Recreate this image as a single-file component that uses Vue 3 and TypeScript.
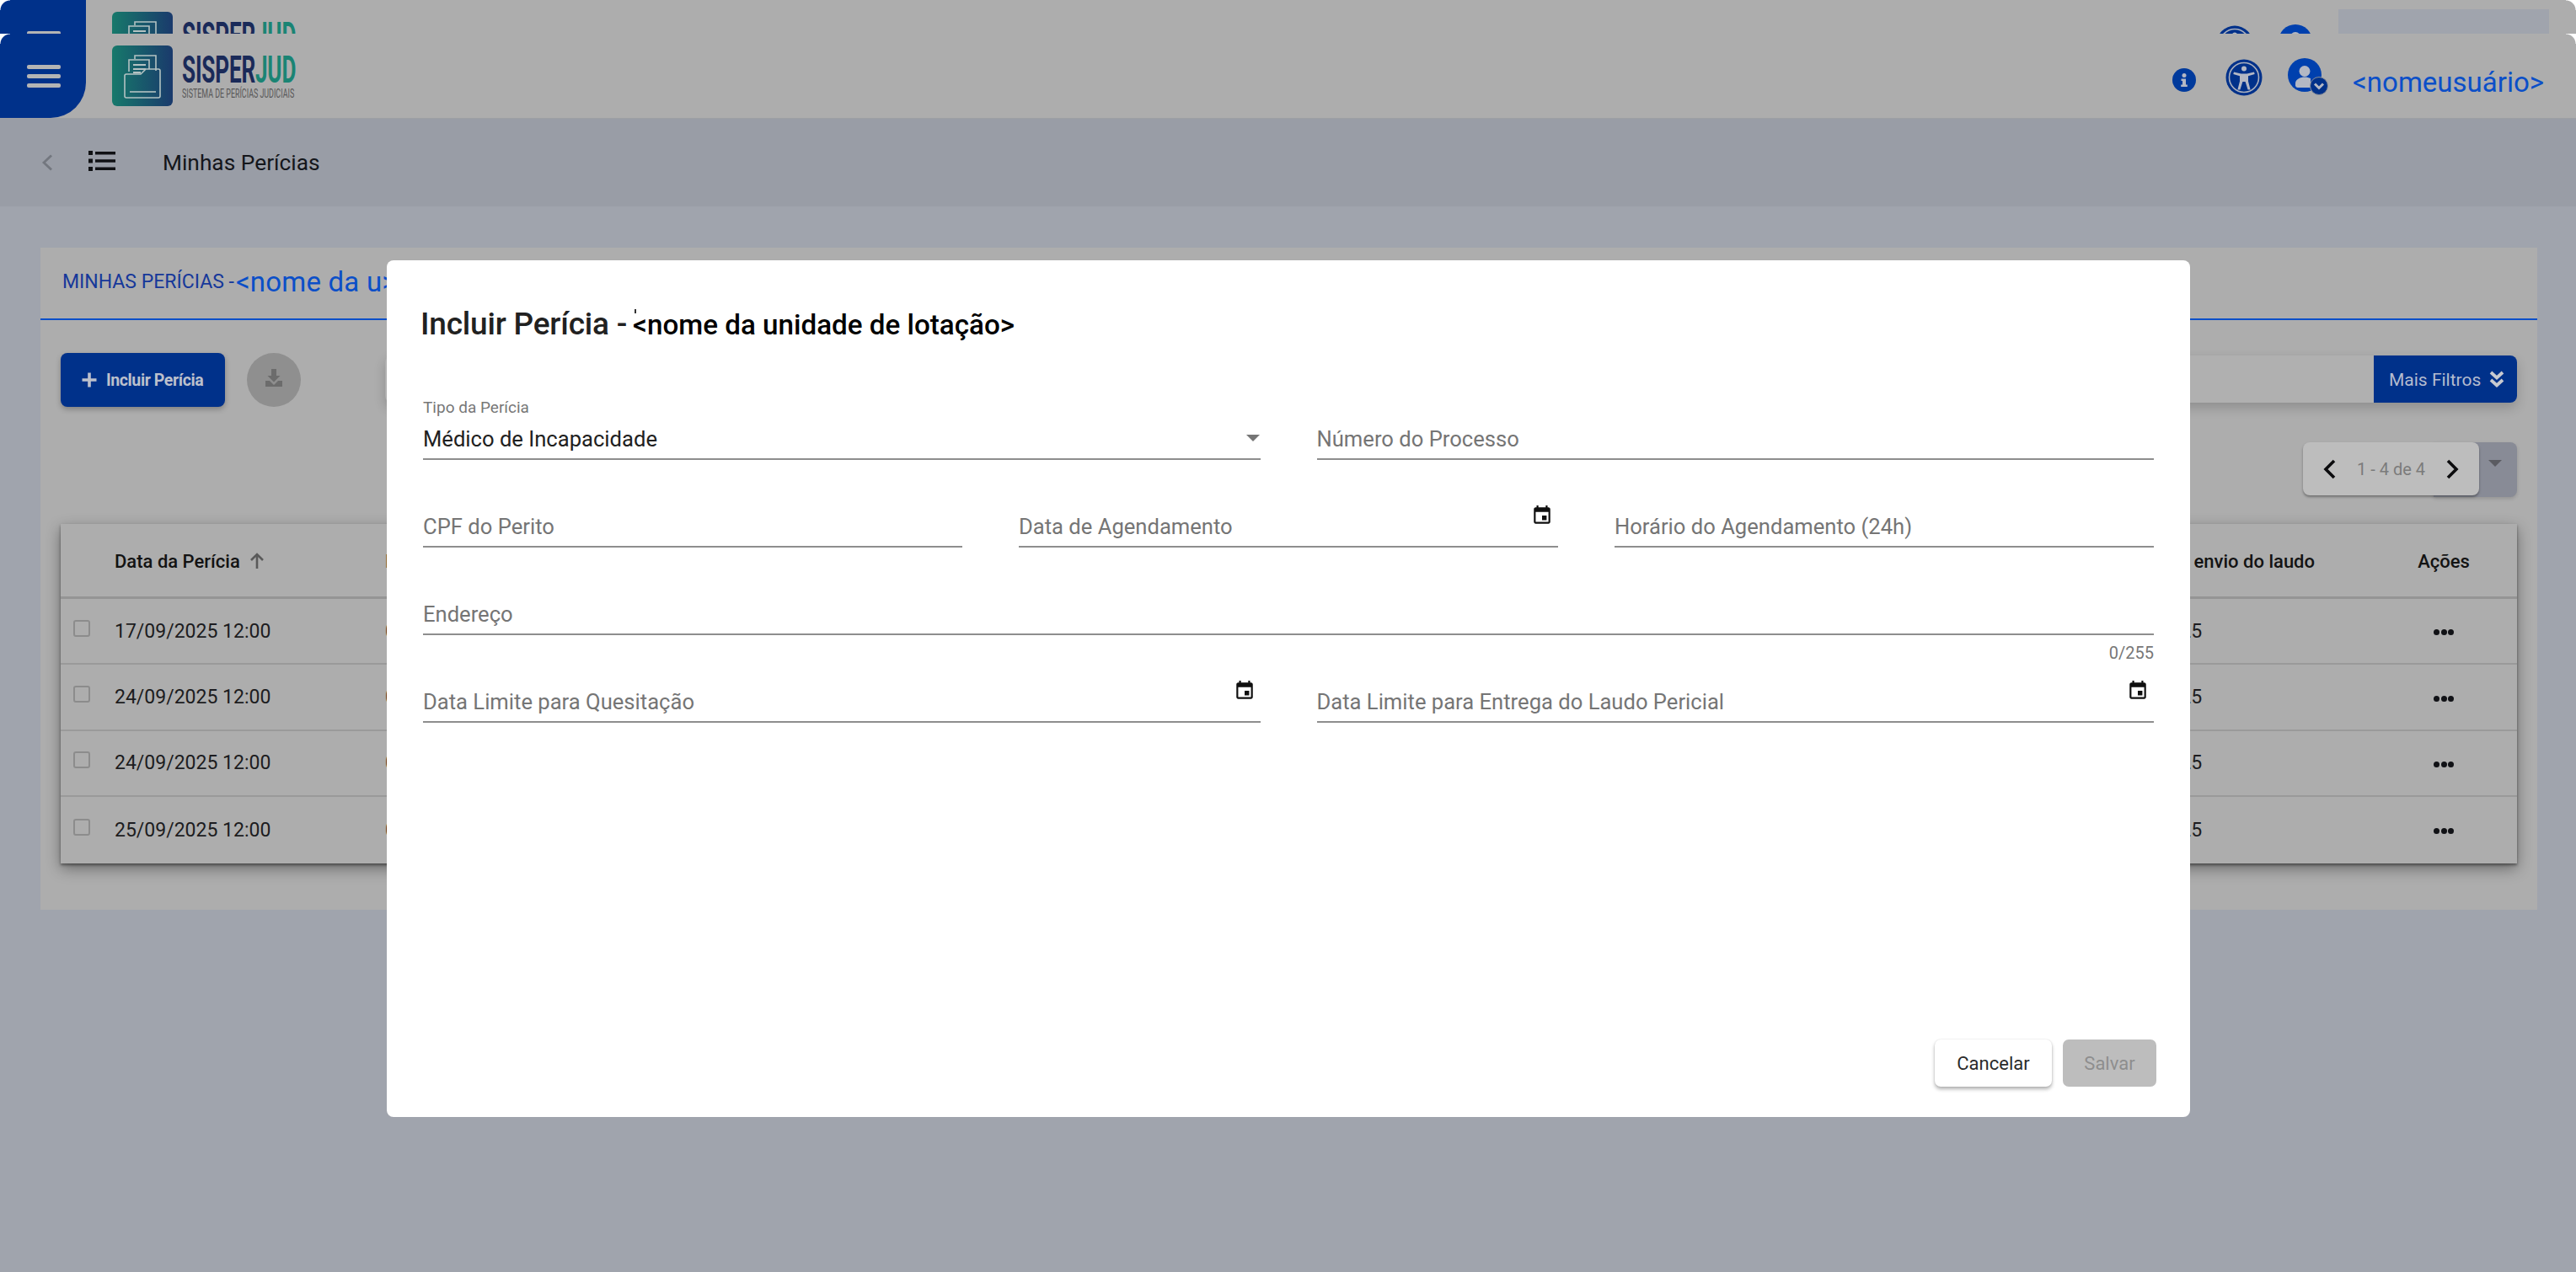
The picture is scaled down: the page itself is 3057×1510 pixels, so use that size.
<script setup lang="ts">
interface Row {
  date: string
  limit: string
}
const rows: Row[] = [
  { date: '17/09/2025 12:00', limit: '17/10/2025' },
  { date: '24/09/2025 12:00', limit: '24/10/2025' },
  { date: '24/09/2025 12:00', limit: '24/10/2025' },
  { date: '25/09/2025 12:00', limit: '25/10/2025' },
]
const headers = ['strip', 'main']
</script>

<template>
  <div class="page">
    <div v-for="h in headers" :key="h" :class="h === 'strip' ? 'header-clip' : 'header-full'">
      <header class="header">
        <button class="menu" aria-label="Menu">
          <span></span><span></span><span></span>
        </button>
        <div class="logo">
          <svg class="logo-mark" width="72" height="72" viewBox="0 0 72 72">
            <defs>
              <linearGradient :id="'lg-' + h" x1="0" y1="0" x2="1" y2="0">
                <stop offset="0" stop-color="#17796b" />
                <stop offset="1" stop-color="#1a3a6c" />
              </linearGradient>
            </defs>
            <rect width="72" height="72" rx="6" :fill="'url(#lg-' + h + ')'" />
            <g fill="none" stroke="#b3c2c2" stroke-width="1.6">
              <path d="M27 16v-4h25v18" />
              <path d="M20 31V17h24v11" />
              <path d="M25 23h15M25 28h15M25 32h9" stroke-width="1.8" />
              <path d="M17 34h17l6-6h15a2 2 0 0 1 2 2v30a2 2 0 0 1-2 2H17a2 2 0 0 1-2-2V36a2 2 0 0 1 2-2z" />
              <path d="M21 55h31" />
            </g>
          </svg>
          <div class="logo-text">
            <div class="logo-name"><span class="n1">SISPER</span><span class="n2">JUD</span></div>
            <div v-if="h === 'main'" class="logo-sub">SISTEMA DE PERÍCIAS JUDICIAIS</div>
          </div>
        </div>
        <div class="head-right">
          <svg class="ic-info" width="28" height="28" viewBox="0 0 28 28">
            <circle cx="14" cy="14" r="14" fill="#003a9c" />
            <circle cx="14" cy="8.5" r="2.500" fill="#b4b8c4" />
            <path d="M10.500 12.500h5.500v7h1.800V22H10.200v-2.500H12V15h-1.500z" fill="#b4b8c4" />
          </svg>
          <svg class="ic-acc" width="44" height="44" viewBox="0 0 44 44">
            <circle cx="22" cy="22" r="21.500" fill="#00318a" />
            <circle cx="22" cy="22" r="17.500" fill="none" stroke="#a9aebc" stroke-width="1.600" />
            <circle cx="22" cy="11.500" r="3" fill="#b4b8c4" />
            <path d="M10 15.500l8.500 2h7l8.500-2 .7 2.600-7.700 2.200v6.200l2.600 10h-3l-3-9.400h-3.200l-3 9.400h-3l2.600-10v-6.200l-7.700-2.200z" fill="#b4b8c4" />
          </svg>
          <svg class="ic-user" width="50" height="46" viewBox="0 0 50 46">
            <circle cx="20" cy="20" r="20" fill="#0040ae" />
            <circle cx="20" cy="15.500" r="6.500" fill="#b4b8c4" />
            <path d="M9 33v-3c0-5 6-7.500 11-7.500 3 0 5 .6 7 1.500V35H12a3 3 0 0 1-3-2z" fill="#b4b8c4" />
            <circle cx="37" cy="33" r="10.500" fill="#00318a" stroke="#8d9099" stroke-width="1" />
            <path d="M32 30.500l5 5 5-5" fill="none" stroke="#b4b8c4" stroke-width="3" />
          </svg>
          <span v-if="h === 'main'" class="username">&lt;nomeusuário&gt;</span>
        </div>
        <i class="corner corner-l"></i>
        <i class="corner corner-r"></i>
      </header>
      <div v-if="h === 'strip'" class="strip-patch"></div>
    </div>

    <nav class="subheader">
      <svg class="ic-back" width="14" height="20" viewBox="0 0 14 20">
        <path d="M12 1.500L3 10l9 8.500" fill="none" stroke="#73777f" stroke-width="2.800" />
      </svg>
      <svg class="ic-list" width="32" height="26" viewBox="0 0 32 26">
        <path d="M0 1h5v5H0zM0 10.500h5v5H0zM0 20h5v5H0zM8 2h24v3.400H8zM8 11.300h24v3.400H8zM8 20.600h24V24H8z" fill="#101114" />
      </svg>
      <span class="crumb">Minhas Perícias</span>
    </nav>

    <main class="content">
      <section class="card">
        <div class="card-title">
          <span class="t1">MINHAS PERÍCIAS -</span><span class="t2">&lt;nome da u&gt;</span>
        </div>
        <div class="card-body">
          <div class="toolbar">
            <button class="btn-add">
              <svg width="20" height="20" viewBox="0 0 20 20"><path d="M8.200 1.500h3.600v6.700h6.700v3.600h-6.700v6.700H8.200v-6.700H1.500V8.200h6.700z" fill="#bcc0cc" /></svg>
              <span>Incluir Perícia</span>
            </button>
            <button class="btn-dl" aria-label="Baixar">
              <svg width="24" height="24" viewBox="0 0 24 24">
                <path d="M9 1h6v8h4.500L12 16.500 4.500 9H9zM2 15h5l5 5 5-5h5v7H2z" fill="#6c6c6c" />
              </svg>
            </button>
            <div class="search">
              <button class="btn-more">
                <span>Mais Filtros</span>
                <svg width="18" height="22" viewBox="0 0 18 22">
                  <path d="M2 2l7 6.500L16 2M2 11l7 6.500L16 11" fill="none" stroke="#c8cad0" stroke-width="3.800" />
                </svg>
              </button>
            </div>
          </div>
          <div class="pager-row">
            <div class="pager">
              <div class="pager-back"><i class="caret-dark"></i></div>
              <div class="pager-card">
                <svg width="16" height="24" viewBox="0 0 16 24"><path d="M13 2L3 12l10 10" fill="none" stroke="#0c0c0e" stroke-width="3.600" /></svg>
                <span class="pager-text">1 - 4 de 4</span>
                <svg width="16" height="24" viewBox="0 0 16 24"><path d="M3 2l10 10L3 22" fill="none" stroke="#0c0c0e" stroke-width="3.600" /></svg>
              </div>
            </div>
          </div>
          <div class="table">
            <div class="tr thead">
              <div></div>
              <div class="th-date">
                <span>Data da Perícia</span>
                <svg width="18" height="20" viewBox="0 0 18 20"><path d="M9 19V3M2 9l7-7 7 7" fill="none" stroke="#5a5a5a" stroke-width="2.600" /></svg>
              </div>
              <div>Processo</div>
              <div class="th-right">Data limite para envio do laudo</div>
              <div class="center acoes">Ações</div>
            </div>
            <div v-for="(r, i) in rows" :key="i" class="tr tbody">
              <div class="cell-check"><i class="check"></i></div>
              <div>{{ r.date }}</div>
              <div>0000</div>
              <div class="center">{{ r.limit }}</div>
              <div class="center acoes"><span class="dots"><i></i><i></i><i></i></span></div>
            </div>
          </div>
        </div>
      </section>
    </main>

    <div class="dialog" role="dialog">
      <h2 class="dlg-title">
        <span class="dt1">Incluir Perícia -</span><span class="dt2">&lt;nome da unidade de lotação&gt;</span>
      </h2>
      <div class="form">
        <div class="form-row cols-2">
          <div class="field">
            <label class="float">Tipo da Perícia</label>
            <span class="value">Médico de Incapacidade</span>
            <i class="caret"></i>
          </div>
          <div class="field"><span class="ph">Número do Processo</span></div>
        </div>
        <div class="form-row cols-3">
          <div class="field"><span class="ph">CPF do Perito</span></div>
          <div class="field">
            <span class="ph">Data de Agendamento</span>
            <svg class="cal" width="26" height="26" viewBox="0 0 24 24"><path d="M17 12h-5v5h5v-5zM16 1v2H8V1H6v2H5c-1.110 0-1.990.9-1.990 2L3 19c0 1.100.89 2 2 2h14c1.100 0 2-.9 2-2V5c0-1.100-.9-2-2-2h-1V1h-2zm3 18H5V8h14v11z" /></svg>
          </div>
          <div class="field"><span class="ph">Horário do Agendamento (24h)</span></div>
        </div>
        <div class="form-row">
          <div class="field">
            <span class="ph">Endereço</span>
            <span class="counter">0/255</span>
          </div>
        </div>
        <div class="form-row cols-2">
          <div class="field">
            <span class="ph">Data Limite para Quesitação</span>
            <svg class="cal" width="26" height="26" viewBox="0 0 24 24"><path d="M17 12h-5v5h5v-5zM16 1v2H8V1H6v2H5c-1.110 0-1.990.9-1.990 2L3 19c0 1.100.89 2 2 2h14c1.100 0 2-.9 2-2V5c0-1.100-.9-2-2-2h-1V1h-2zm3 18H5V8h14v11z" /></svg>
          </div>
          <div class="field">
            <span class="ph">Data Limite para Entrega do Laudo Pericial</span>
            <svg class="cal" width="26" height="26" viewBox="0 0 24 24"><path d="M17 12h-5v5h5v-5zM16 1v2H8V1H6v2H5c-1.110 0-1.990.9-1.990 2L3 19c0 1.100.89 2 2 2h14c1.100 0 2-.9 2-2V5c0-1.100-.9-2-2-2h-1V1h-2zm3 18H5V8h14v11z" /></svg>
          </div>
        </div>
      </div>
      <div class="dlg-actions">
        <button class="btn-cancel">Cancelar</button>
        <button class="btn-save" disabled>Salvar</button>
      </div>
    </div>
  </div>
</template>

<style>
html, body { margin: 0; background: #a0a4ad; }
</style>

<style scoped>
.page {
  position: relative;
  width: 3057px;
  height: 1510px;
  overflow: hidden;
  background: #a0a4ad;
  font-family: Roboto, "Liberation Sans", sans-serif;
  color: #1a1a1c;
}
button { font-family: inherit; border: 0; cursor: pointer; padding: 0; }
i { display: block; font-style: normal; }

.header-clip { position: relative; height: 40px; overflow: hidden; }
.header-full { height: 100px; }
.strip-patch {
  position: absolute;
  left: 2775px;
  top: 11px;
  width: 250px;
  height: 29px;
  background: #a0a4ad;
}
.header {
  position: relative;
  display: flex;
  height: 100px;
  background: #adadad;
}
.menu {
  display: flex;
  flex-direction: column;
  gap: 6px;
  width: 102px;
  height: 100px;
  padding: 37px 30px 0 32px;
  box-sizing: border-box;
  background: #00318a;
  border-radius: 0 0 42px 0;
}
.menu span { display: block; height: 5px; width: 40px; border-radius: 2px; background: #b4b4b4; }
.corner { position: absolute; top: 0; width: 12px; height: 12px; }
.corner-l { left: 0; background: radial-gradient(circle at 100% 100%, transparent 11px, #ffffff 12px); }
.corner-r { right: 0; background: radial-gradient(circle at 0 100%, transparent 11px, #ffffff 12px); }

.logo { display: flex; align-items: flex-start; gap: 11px; margin-left: 31px; }
.logo-mark { margin-top: 14px; }
.logo-text { width: 134px; margin-top: 25px; }
.logo-name {
  font-size: 45px;
  font-weight: 700;
  line-height: 36px;
  white-space: nowrap;
  transform: scaleX(0.58);
  transform-origin: 0 50%;
  letter-spacing: -0.3px;
}
.n1 { color: #1a2a59; }
.n2 { color: #1a8474; }
.logo-sub {
  margin-top: 3px;
  font-size: 15px;
  line-height: 14px;
  color: #585858;
  white-space: nowrap;
  transform: scaleX(0.593);
  transform-origin: 0 50%;
}

.head-right { display: flex; align-items: flex-start; margin-left: auto; padding-right: 38px; }
.ic-info { margin-top: 41px; }
.ic-acc { margin-top: 30px; margin-left: 35px; }
.ic-user { margin-top: 29px; margin-left: 30px; margin-right: 265px; }
.username {
  margin-top: 40px;
  margin-left: -238px;
  font-size: 33px;
  line-height: 36px;
  color: #0b4fc8;
  white-space: nowrap;
}

.subheader {
  display: flex;
  align-items: center;
  height: 105px;
  background: #999da6;
  padding-left: 49px;
  box-shadow: inset 0 1px 0 #9d9fa4;
}
.ic-list { margin-left: 42px; margin-top: -3px; }
.crumb { margin-left: 56px; margin-top: 1px; font-size: 26.300px; color: #14161b; }

.content { padding: 49px 46px 0 48px; }
.card { height: 786px; background: #adadad; }
.card-title {
  display: flex;
  align-items: center;
  box-sizing: border-box;
  height: 86px;
  padding: 0 0 3px 26px;
  border-bottom: 2px solid #0b4fc8;
  white-space: nowrap;
  overflow: hidden;
}
.t1 { font-size: 23px; color: #16389a; }
.t2 { margin-left: 2px; font-size: 33px; letter-spacing: 0.2px; color: #0b4fc8; }
.card-body { padding: 39px 24px 0; }

.toolbar { display: flex; align-items: flex-start; height: 64px; }
.btn-add {
  display: flex;
  align-items: center;
  gap: 10px;
  width: 195px;
  height: 64px;
  padding: 0 0 0 24px;
  box-sizing: border-box;
  border-radius: 8px;
  background: #00318a;
  color: #bcc0cc;
  font-size: 19.500px;
  font-weight: 700;
  letter-spacing: -0.4px;
  box-shadow: 0 3px 6px rgba(0, 0, 0, .25);
}
.btn-dl {
  display: flex;
  align-items: center;
  justify-content: center;
  width: 64px;
  height: 64px;
  margin-left: 26px;
  padding-bottom: 4px;
  border-radius: 50%;
  background: #8f8f8f;
}
.search {
  display: flex;
  justify-content: flex-end;
  flex: 1;
  height: 56px;
  margin: 3px 0 0 100px;
  background: #b0b0b0;
  border-radius: 8px;
  box-shadow: 0 6px 14px rgba(0, 0, 0, .18);
}
.btn-more {
  display: flex;
  align-items: center;
  gap: 10px;
  width: 170px;
  height: 56px;
  padding: 2px 0 0 18px;
  box-sizing: border-box;
  border-radius: 0 8px 8px 0;
  background: #00318a;
  color: #b4bccf;
  font-size: 21px;
}
.pager-row { display: flex; justify-content: flex-end; margin-top: 42px; }
.pager { position: relative; width: 254px; height: 65px; }
.pager-back {
  position: absolute;
  right: 0;
  top: 0;
  width: 99px;
  height: 65px;
  border-radius: 0 8px 8px 0;
  background: #888b96;
  box-shadow: 0 2px 4px rgba(0, 0, 0, .15);
}
.caret-dark {
  position: absolute;
  right: 18px;
  top: 21px;
  border-left: 8px solid transparent;
  border-right: 8px solid transparent;
  border-top: 8px solid #5a5b61;
}
.pager-card {
  position: relative;
  display: flex;
  align-items: center;
  justify-content: space-between;
  box-sizing: border-box;
  width: 209px;
  height: 63px;
  padding: 0 24px;
  border-radius: 8px;
  background: #bdbdbd;
  box-shadow: 0 2px 3px rgba(0, 0, 0, .35);
}
.pager-text { font-size: 20px; color: #7b7b7b; }

.table {
  margin-top: 32px;
  background: #adadad;
  box-shadow: 0 6px 16px rgba(0, 0, 0, .38), 0 2px 3px rgba(0, 0, 0, .4);
}
.tr {
  display: grid;
  grid-template-columns: 64px 321px 1fr 390px 240px;
  align-items: center;
  box-sizing: border-box;
}
.thead {
  height: 89px;
  padding-top: 2px;
  border-bottom: 3px solid #949494;
  font-size: 22px;
  font-weight: 500;
  color: #131313;
}
.th-date { display: flex; align-items: center; gap: 11px; }
.tbody {
  height: 78.400px;
  border-bottom: 2px solid #9a9a9a;
  font-size: 23px;
  color: #1c1c20;
}
.tbody:last-child { border-bottom: 0; }
.center { text-align: center; }
.th-right { text-align: right; white-space: nowrap; }
.acoes { padding-left: 66px; }
.cell-check { display: flex; padding-left: 15px; }
.check {
  width: 16px;
  height: 16px;
  margin-top: -7px;
  border: 2px solid #8c8c8c;
  border-radius: 3px;
}
.dots { display: inline-flex; gap: 1.500px; vertical-align: middle; }
.dots i { width: 7px; height: 7px; border-radius: 50%; background: #111216; }

.dialog {
  position: absolute;
  left: 459px;
  top: 309px;
  display: flex;
  flex-direction: column;
  box-sizing: border-box;
  width: 2140px;
  height: 1017px;
  padding: 0 43px 36px 43px;
  background: #fff;
  border-radius: 8px;
}
.dlg-title {
  display: flex;
  align-items: baseline;
  height: 169px;
  margin: 0;
  padding-top: 54px;
  box-sizing: border-box;
  margin-left: -3px;
  font-weight: 500;
  white-space: nowrap;
}
.dt1 { font-size: 37px; color: #212121; letter-spacing: -0.2px; }
.dt2 { position: relative; margin-left: 7px; font-size: 33.200px; color: #000; }
.dt2::before {
  content: "";
  position: absolute;
  left: 2px;
  top: 1px;
  width: 2px;
  height: 5px;
  background: #333;
}
.form { display: flex; flex-direction: column; gap: 36px; }
.form-row { display: grid; gap: 67px; }
.cols-2 { grid-template-columns: 1fr 1fr; }
.cols-3 { grid-template-columns: 1fr 1fr 1fr; }
.field {
  position: relative;
  display: flex;
  align-items: flex-end;
  box-sizing: border-box;
  height: 68px;
  padding-bottom: 8.500px;
  border-bottom: 2px solid #8e8e8e;
  font-size: 25.600px;
  line-height: 30px;
}
.float { position: absolute; left: 0; top: -6px; font-size: 19px; line-height: 24px; color: #777; }
.value { color: #212121; }
.ph { color: #757575; }
.caret {
  position: absolute;
  right: 1px;
  bottom: 20px;
  border-left: 8px solid transparent;
  border-right: 8px solid transparent;
  border-top: 8px solid #757575;
}
.cal { position: absolute; right: 6px; bottom: 23px; fill: #0f0f0f; }
.counter {
  position: absolute;
  right: 0;
  top: 100%;
  margin-top: 12px;
  font-size: 20px;
  line-height: 22px;
  color: #777;
}
.dlg-actions { display: flex; justify-content: flex-end; gap: 13px; margin-top: auto; margin-right: -3px; }
.btn-cancel, .btn-save { height: 56px; border-radius: 7px; font-size: 22px; }
.btn-cancel {
  width: 139px;
  background: #fff;
  color: #2b2b2b;
  box-shadow: 0 3px 4px rgba(0, 0, 0, .3), 0 0 2px rgba(0, 0, 0, .12);
}
.btn-save { width: 111px; background: #bdbdbd; color: #8e8e8e; }
</style>
